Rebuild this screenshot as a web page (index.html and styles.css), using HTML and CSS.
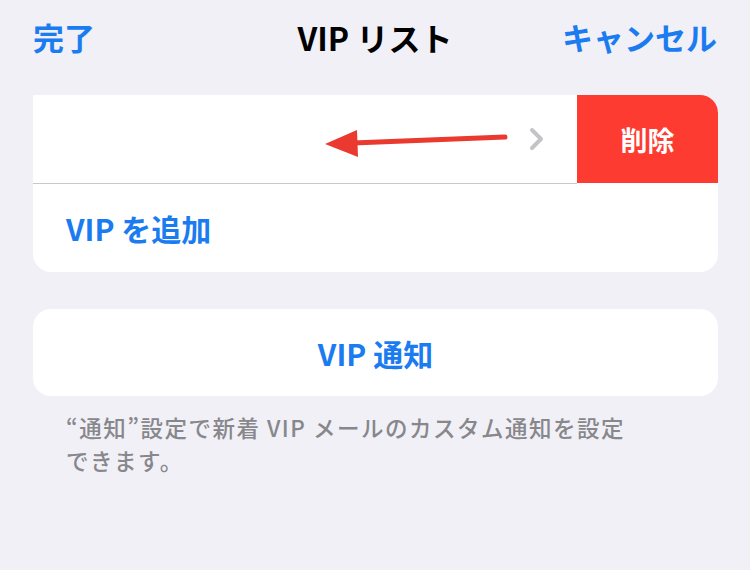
FILE: index.html
```html
<!DOCTYPE html>
<html lang="ja">
<head>
<meta charset="utf-8">
<link rel="stylesheet" href="styles.css">
</head>
<body>
<div class="nav">
  <span class="nav-btn nav-left">完了</span>
  <span class="nav-title">VIP リスト</span>
  <span class="nav-btn nav-right">キャンセル</span>
</div>
<div class="content">
  <div class="card card-list">
    <div class="row swipe-row">
      <div class="swipe-main">
        <svg class="arrow" width="200" height="40" viewBox="0 0 200 40">
          <line x1="180" y1="12" x2="28" y2="18" stroke="#ea3a2f" stroke-width="5" stroke-linecap="round"/>
          <polygon points="0,19 32,5 33,32" fill="#ea3a2f"/>
        </svg>
        <svg class="chevron" width="16" height="24" viewBox="0 0 16 24">
          <polyline points="3,3 12,12 3,21" fill="none" stroke="#c4c4c8" stroke-width="4" stroke-linecap="round" stroke-linejoin="round"/>
        </svg>
      </div>
      <div class="delete-btn">削除</div>
    </div>
    <div class="divider"></div>
    <div class="row add-row">VIP を追加</div>
  </div>
  <div class="card card-notify">VIP 通知</div>
  <p class="footer">“通知”設定で新着 VIP メールのカスタム通知を設定<br>できます。</p>
</div>
</body>
</html>
```

FILE: styles.css
```css
html, body {
  margin: 0;
  padding: 0;
  background: #f1f0f6;
  font-family: "Noto Sans CJK JP", "Noto Sans", sans-serif;
}
.nav {
  height: 73px;
  display: grid;
  grid-template-columns: 1fr auto 1fr;
  align-items: center;
  padding: 0 33px;
  font-size: 31px;
}
.nav-btn {
  color: #1a7cf0;
  font-weight: 600;
}
.nav-right {
  justify-self: end;
}
.nav-title {
  color: #000;
  font-weight: 700;
  font-size: 32px;
}
.content {
  padding: 22px 32px 0 33px;
}
.card {
  background: #fff;
  border-radius: 18px;
}
.card-list {
  border-radius: 0 18px 18px 18px;
  overflow: hidden;
}
.row {
  display: flex;
}
.swipe-row {
  height: 88px;
}
.swipe-main {
  flex: 1;
  position: relative;
  display: flex;
  align-items: center;
  justify-content: flex-end;
  padding-right: 32px;
}
.arrow {
  position: absolute;
  left: 292px;
  top: 30px;
}
.chevron {
  display: block;
}
.delete-btn {
  width: 141px;
  background: #fe3b30;
  color: #fff;
  font-size: 27px;
  font-weight: 600;
  display: flex;
  align-items: center;
  justify-content: center;
}
.divider {
  height: 1px;
  background: #c8c7cc;
  margin-right: 141px;
}
.add-row {
  height: 88px;
  align-items: center;
  padding-left: 33px;
  color: #1a7cf0;
  font-size: 30px;
  font-weight: 600;
}
.card-notify {
  margin-top: 37px;
  height: 87px;
  display: flex;
  align-items: center;
  justify-content: center;
  color: #1a7cf0;
  font-size: 30px;
  font-weight: 600;
}
.footer {
  margin: 15px 0 0 33px;
  color: #87878c;
  font-size: 22.5px;
  font-weight: 500;
  letter-spacing: 1.5px;
  line-height: 33px;
}
```
